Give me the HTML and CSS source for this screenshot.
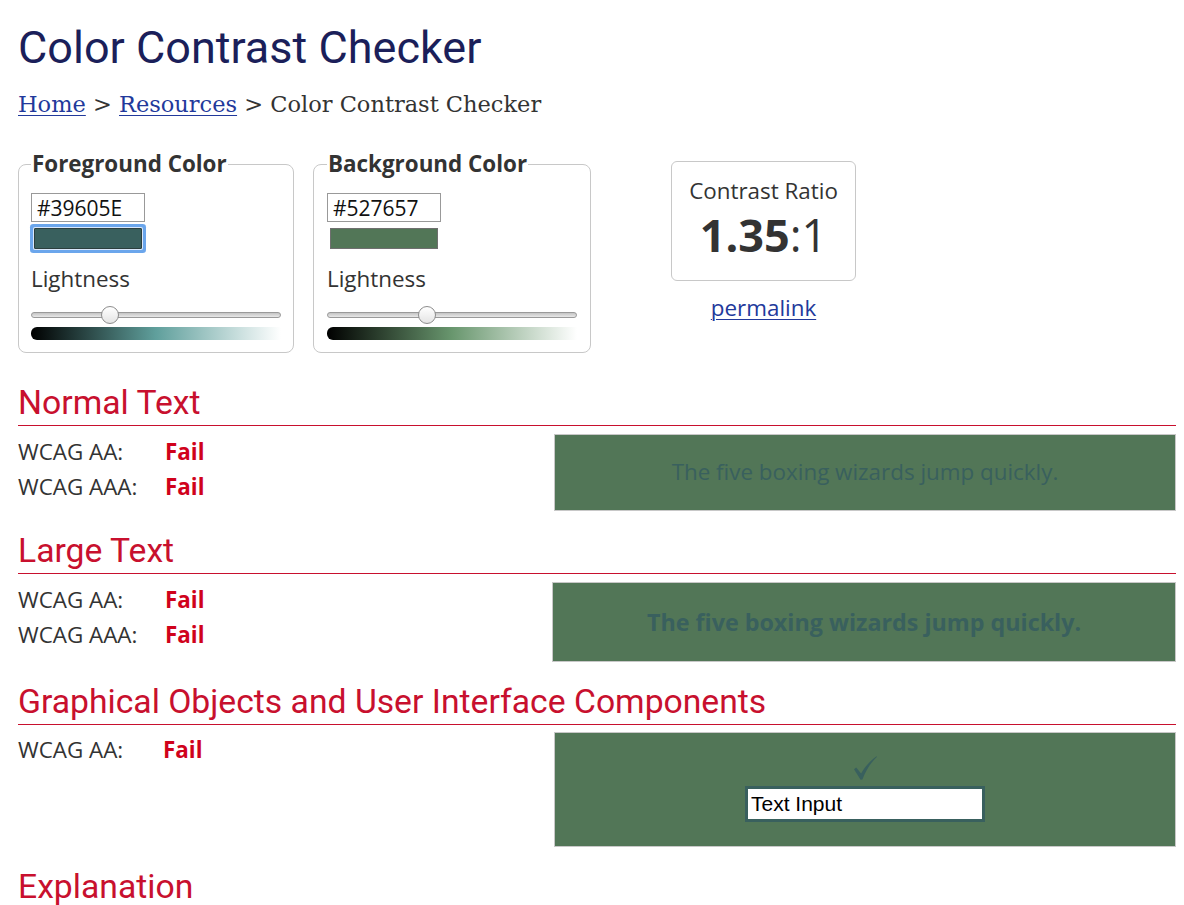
FILE: index.html
```html
<!DOCTYPE html>
<html lang="en">
<head>
<meta charset="utf-8">
<title>Color Contrast Checker</title>
<link rel="stylesheet" href="styles.css">
</head>
<body>
<main class="page">
  <h1 class="title">Color Contrast Checker</h1>
  <nav class="crumbs"><a href="#">Home</a> &gt; <a href="#">Resources</a> &gt; Color Contrast Checker</nav>

  <div class="pickers">
    <fieldset class="picker picker-fg">
      <legend class="picker-legend">Foreground Color</legend>
      <input class="hex" type="text" value="#39605E">
      <span class="swatch swatch-focus" style="background:#39605E"></span>
      <label class="light-label">Lightness</label>
      <input class="slider" type="range" min="0" max="100" value="30">
      <div class="grad grad-fg"></div>
    </fieldset>

    <fieldset class="picker picker-bg">
      <legend class="picker-legend">Background Color</legend>
      <input class="hex" type="text" value="#527657">
      <span class="swatch" style="background:#527657"></span>
      <label class="light-label">Lightness</label>
      <input class="slider" type="range" min="0" max="100" value="39">
      <div class="grad grad-bg"></div>
    </fieldset>

    <div class="ratio-col">
      <div class="ratio-box">
        <div class="ratio-label">Contrast Ratio</div>
        <div class="ratio-value"><b>1.35</b>:1</div>
      </div>
      <a class="permalink" href="#">permalink</a>
    </div>
  </div>

  <section class="result">
    <h2 class="result-title">Normal Text</h2>
    <div class="result-body">
      <div class="levels">
        <div class="level"><span class="level-name">WCAG AA:</span><span class="fail">Fail</span></div>
        <div class="level"><span class="level-name">WCAG AAA:</span><span class="fail">Fail</span></div>
      </div>
      <div class="sample sample-normal">The five boxing wizards jump quickly.</div>
    </div>
  </section>

  <section class="result">
    <h2 class="result-title">Large Text</h2>
    <div class="result-body result-body-large">
      <div class="levels">
        <div class="level"><span class="level-name">WCAG AA:</span><span class="fail">Fail</span></div>
        <div class="level"><span class="level-name">WCAG AAA:</span><span class="fail">Fail</span></div>
      </div>
      <div class="sample sample-large">The five boxing wizards jump quickly.</div>
    </div>
  </section>

  <section class="result">
    <h2 class="result-title">Graphical Objects and User Interface Components</h2>
    <div class="result-body result-body-ui">
      <div class="levels">
        <div class="level"><span class="level-name level-name-ui">WCAG AA:</span><span class="fail">Fail</span></div>
      </div>
      <div class="sample sample-ui">
        <svg class="check" width="23" height="24" viewBox="0 0 23 24" aria-hidden="true">
          <path d="M0 13.2 L2.2 11.6 L7.1 17.6 C10.6 11.2 15.6 5.2 22.6 0.3 L23 0.8 C16.8 6.6 12.1 13.8 8.4 23.6 L6.6 23.8 Z" fill="#39605E"/>
        </svg>
        <input class="ui-input" type="text" value="Text Input">
      </div>
    </div>
  </section>

  <section class="result">
    <h2 class="result-title">Explanation</h2>
  </section>
</main>
</body>
</html>
```

FILE: styles.css
```css
html, body {
  margin: 0;
  padding: 0;
  background: #fff;
}

body {
  font-family: "Open Sans", "DejaVu Sans", sans-serif;
  font-size: 22.4px;
  color: #333;
}

.page {
  padding: 0 8px 0 18px;
}

.title {
  font-family: Roboto, "Liberation Sans", sans-serif;
  font-weight: 400;
  font-size: 45px;
  line-height: 50px;
  color: #1b1f5a;
  margin: 23px 0 0;
}

.crumbs {
  font-family: "DejaVu Serif", "Liberation Serif", serif;
  font-size: 22.5px;
  line-height: 28px;
  color: #333;
  margin-top: 17px;
}

.crumbs a,
.permalink {
  color: #22399b;
  text-decoration: underline;
  text-decoration-thickness: 1px;
  text-underline-offset: 3px;
}

.pickers {
  display: flex;
  align-items: flex-start;
  gap: 19px;
  margin-top: 31px;
  margin-bottom: 32px;
}

.picker {
  box-sizing: border-box;
  margin: 0;
  border: 1px solid #c8c8c8;
  border-radius: 8px;
  padding: 14px 12px 12px;
  min-width: 0;
  display: flex;
  flex-direction: column;
  align-items: flex-start;
}

.picker-fg {
  width: 276px;
}

.picker-bg {
  width: 278px;
  padding-left: 13px;
}

.picker-legend {
  font-weight: 700;
  font-size: 22.4px;
  line-height: 30px;
  padding: 0 1px;
  color: #333;
}

.hex {
  box-sizing: border-box;
  width: 114px;
  height: 29px;
  margin: 0;
  padding: 0 5px;
  border: 1px solid #999;
  border-radius: 0;
  font-family: "Open Sans", sans-serif;
  font-size: 21px;
  color: #111;
  background: #fff;
  outline: none;
}

.swatch {
  display: block;
  box-sizing: border-box;
  width: 108px;
  height: 21px;
  margin: 6px 0 0 3px;
  border: 1px solid #6f6f6f;
}

.swatch-focus {
  border-color: #2c3f3e;
  border-radius: 1px;
  box-shadow: 0 0 0 1px #d9e8fb, 0 0 0 4px #6ba6ec;
}

.light-label {
  display: block;
  margin-top: 15px;
  font-size: 22.4px;
  line-height: 30px;
  color: #333;
}

.slider {
  -webkit-appearance: none;
  appearance: none;
  width: 250px;
  height: 18px;
  margin: 12px 0 0;
  padding: 0;
  background: transparent;
}

.slider::-webkit-slider-runnable-track {
  height: 6px;
  border-radius: 3px;
  border: 1px solid #9a9a9a;
  box-sizing: border-box;
  background: linear-gradient(#c4c4c4, #e8e8e8);
}

.slider::-webkit-slider-thumb {
  -webkit-appearance: none;
  appearance: none;
  width: 18px;
  height: 18px;
  margin-top: -7px;
  border-radius: 50%;
  border: 1px solid #8d8d8d;
  box-sizing: border-box;
  background: linear-gradient(#ffffff, #e4e4e4);
}

.grad {
  width: 250px;
  height: 13px;
  margin-top: 3px;
  border-radius: 6px 0 0 6px;
}

.grad-fg {
  background: linear-gradient(to right, #000 0%, hsl(177, 25%, 25%) 25%, hsl(177, 25%, 50%) 50%, hsl(177, 25%, 75%) 75%, #fff 100%);
}

.grad-bg {
  background: linear-gradient(to right, #000 0%, hsl(127, 18%, 25%) 25%, hsl(127, 18%, 50%) 50%, hsl(127, 18%, 75%) 75%, #fff 100%);
}

.ratio-col {
  display: flex;
  flex-direction: column;
  align-items: center;
  margin-left: 61px;
  margin-top: 12px;
}

.ratio-box {
  box-sizing: border-box;
  width: 185px;
  height: 120px;
  border: 1px solid #c8c8c8;
  border-radius: 6px;
  padding-top: 14px;
  text-align: center;
}

.ratio-label {
  font-size: 22.4px;
  line-height: 30px;
  color: #333;
}

.ratio-value {
  font-size: 45px;
  line-height: 50px;
  margin-top: 4px;
  color: #333;
}

.ratio-value b {
  font-weight: 700;
}

.permalink {
  font-size: 22.4px;
  line-height: 30px;
  margin-top: 12px;
}

.result {
  margin-top: 22px;
}

.result-title {
  font-family: Roboto, "Liberation Sans", sans-serif;
  font-weight: 400;
  font-size: 33.7px;
  line-height: 36px;
  color: #c8102e;
  margin: 0;
  padding-bottom: 4px;
  border-bottom: 1px solid #c8102e;
}

.result-body {
  display: grid;
  grid-template-columns: 1fr 622px;
  margin-top: 8px;
}

.result-body-large {
  grid-template-columns: 1fr 624px;
}

.result-body-ui {
  margin-top: 7px;
}

.level {
  display: flex;
  font-size: 22.4px;
  line-height: 35px;
  color: #333;
}

.level-name {
  width: 147px;
  flex: none;
}

.level-name-ui {
  width: 145px;
}

.fail {
  font-weight: 700;
  color: #d0021b;
}

.sample {
  box-sizing: border-box;
  background: #527657;
  border: 1px solid #c8c8c8;
  color: #39605E;
  text-align: center;
}

.sample-normal {
  font-size: 22.4px;
  line-height: 30px;
  padding: 22px 0 23px;
}

.sample-large {
  font-size: 23.3px;
  font-weight: 700;
  line-height: 30px;
  padding: 24px 0 24px;
}

.sample-ui {
  display: flex;
  flex-direction: column;
  align-items: center;
  height: 115px;
  padding-top: 23px;
}

.check {
  display: block;
  flex: none;
}

.ui-input {
  box-sizing: border-box;
  width: 240px;
  height: 36px;
  margin: 6px 0 0;
  padding: 0 3px;
  border: 3px solid #39605E;
  border-radius: 0;
  background: #fff;
  font-family: "Liberation Sans", Arial, sans-serif;
  font-size: 21px;
  color: #000;
  outline: none;
}
```
